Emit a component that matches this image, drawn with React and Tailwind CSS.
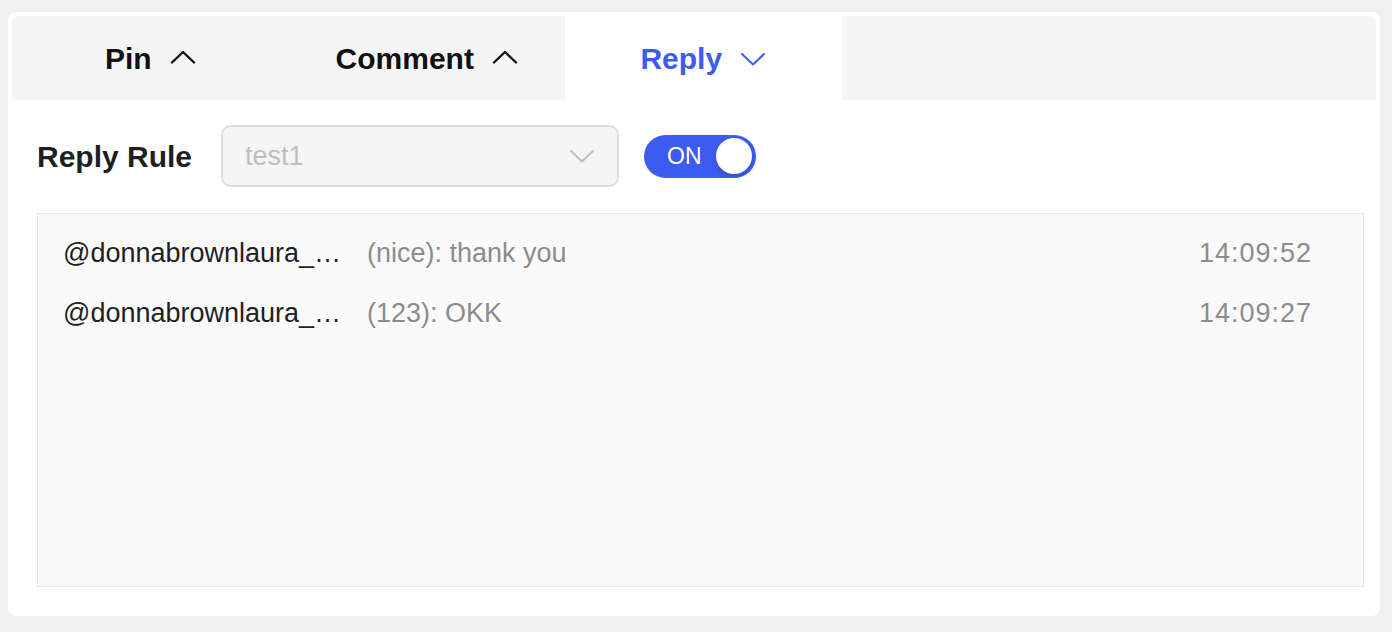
import React, { useState } from 'react';

const font = { fontFamily: '"Liberation Sans", Arial, sans-serif' };

const ChevronUp = ({ className }) => (
    <svg width="26" height="14" viewBox="0 0 26 14" fill="none" stroke="currentColor" strokeWidth="2.4" strokeLinecap="round" strokeLinejoin="round" className={className}><path d="M2 12.5 13 2l11 10.5"/></svg>
);

const ChevronDown = ({ className, strokeWidth = 2 }) => (
    <svg width="26" height="14" viewBox="0 0 26 14" fill="none" stroke="currentColor" strokeWidth={strokeWidth} strokeLinecap="round" strokeLinejoin="round" className={className}><path d="M2 2l11 10.5L24 2"/></svg>
);

const replies = [
    { user: '@donnabrownlaura_…', text: '(nice): thank you', time: '14:09:52' },
    { user: '@donnabrownlaura_…', text: '(123): OKK', time: '14:09:27' },
];

export default function App() {
    const [tab, setTab] = useState('reply');
    const [on, setOn] = useState(true);

    const tabs = [
        { id: 'pin', label: 'Pin' },
        { id: 'comment', label: 'Comment' },
        { id: 'reply', label: 'Reply' },
    ];

    return (
        <div className="w-[1392px] h-[632px] bg-[#f0f0f0] pt-[12px] pl-[8px]" style={font}>
            <div className="w-[1372px] h-[604px] bg-white rounded-[8px] p-[4px] flex flex-col">

                {/* tab bar */}
                <div className="h-[84px] bg-[#f5f5f5] rounded-t-[6px] flex shrink-0">
                    {tabs.map(t => {
                        const active = tab === t.id;
                        return (
                            <button
                                key={t.id}
                                onClick={() => setTab(t.id)}
                                className={`w-[276.5px] h-full flex items-center justify-center gap-[18px] text-[30px] font-bold ${active ? 'bg-white text-[#3d5bf1]' : 'text-[#111111]'}`}
                            >
                                <span>{t.label}</span>
                                {active ? <ChevronDown className="mt-[2px]" /> : <ChevronUp className="-mt-[2px]" />}
                            </button>
                        );
                    })}
                </div>

                <div className="flex-1 flex flex-col pl-[25px] pr-[12px] pb-[25px]">
                    {/* rule row */}
                    <div className="flex items-center mt-[25px] h-[62px]">
                        <span className="text-[30px] font-bold text-[#1f1f1f] w-[184px]">Reply Rule</span>
                        <div className="w-[398px] h-[62px] rounded-[10px] border-2 border-[#dcdcdc] bg-[#f5f5f5] flex items-center justify-between pl-[22px] pr-[22px]">
                            <span className="text-[27px] text-[#bfbfbf]">test1</span>
                            <ChevronDown className="text-[#bdbdbd]" strokeWidth={1.8} />
                        </div>
                        <button
                            onClick={() => setOn(!on)}
                            className={`ml-[25px] w-[112px] h-[43px] rounded-full flex items-center justify-between pl-[23px] pr-[4px] ${on ? 'bg-[#3d5bf1]' : 'bg-[#bfbfbf]'}`}
                        >
                            <span className="text-[23px] text-white">ON</span>
                            <span className="w-[36px] h-[36px] rounded-full bg-white shadow-[0_2px_4px_rgba(0,0,0,0.2)]"></span>
                        </button>
                    </div>

                    {/* reply log */}
                    <div className="flex-1 mt-[26px] bg-[#fafafa] border border-[#e8e8e8] pt-[9px] pl-[25px] pr-[51px]">
                        {replies.map((r, i) => (
                            <div key={i} className="h-[60px] flex items-center text-[27px]">
                                <span className="w-[304px] whitespace-nowrap text-[#1f1f1f]">{r.user}</span>
                                <span className="text-[#8c8c8c]">{r.text}</span>
                                <span className="ml-auto text-[#8c8c8c] tracking-[1px]">{r.time}</span>
                            </div>
                        ))}
                    </div>
                </div>
            </div>
        </div>
    );
}
